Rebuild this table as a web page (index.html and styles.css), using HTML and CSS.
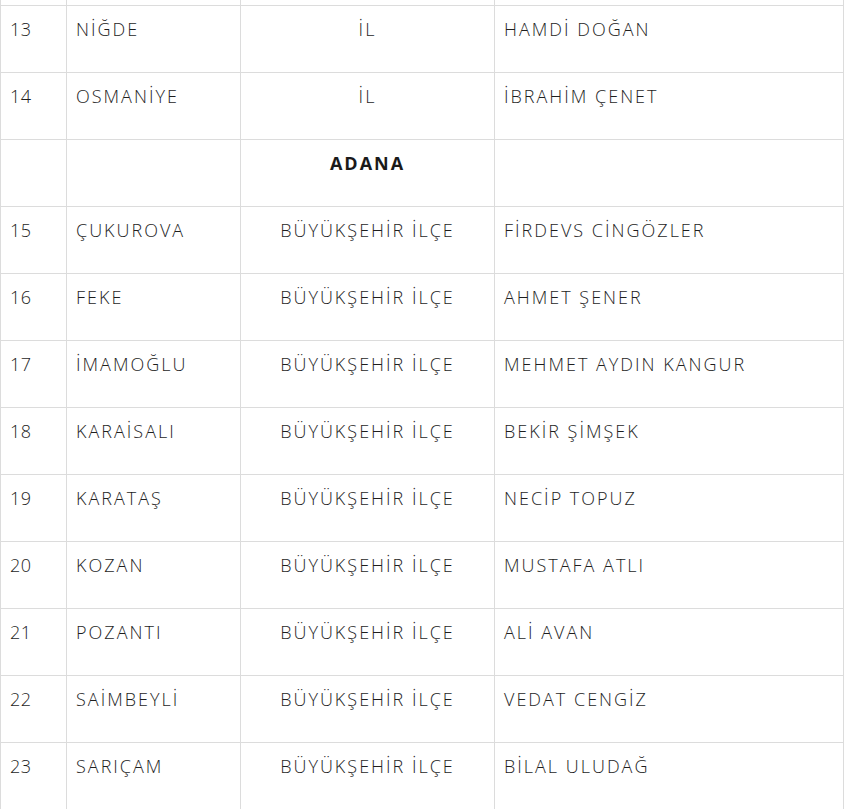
FILE: index.html
```html
<!DOCTYPE html>
<html lang="tr">
<head>
<meta charset="utf-8">
<link rel="stylesheet" href="styles.css">
</head>
<body>
<table class="list">
  <colgroup>
    <col class="c-no">
    <col class="c-name">
    <col class="c-type">
    <col class="c-mayor">
  </colgroup>
  <tbody>
    <tr class="cut"><td></td><td></td><td></td><td></td></tr>
    <tr><td class="num">13</td><td>NİĞDE</td><td class="mid">İL</td><td>HAMDİ DOĞAN</td></tr>
    <tr><td class="num">14</td><td>OSMANİYE</td><td class="mid">İL</td><td>İBRAHİM ÇENET</td></tr>
    <tr><td></td><td></td><td class="mid head">ADANA</td><td></td></tr>
    <tr><td class="num">15</td><td>ÇUKUROVA</td><td class="mid">BÜYÜKŞEHİR İLÇE</td><td>FİRDEVS CİNGÖZLER</td></tr>
    <tr><td class="num">16</td><td>FEKE</td><td class="mid">BÜYÜKŞEHİR İLÇE</td><td>AHMET ŞENER</td></tr>
    <tr><td class="num">17</td><td>İMAMOĞLU</td><td class="mid">BÜYÜKŞEHİR İLÇE</td><td>MEHMET AYDIN KANGUR</td></tr>
    <tr><td class="num">18</td><td>KARAİSALI</td><td class="mid">BÜYÜKŞEHİR İLÇE</td><td>BEKİR ŞİMŞEK</td></tr>
    <tr><td class="num">19</td><td>KARATAŞ</td><td class="mid">BÜYÜKŞEHİR İLÇE</td><td>NECİP TOPUZ</td></tr>
    <tr><td class="num">20</td><td>KOZAN</td><td class="mid">BÜYÜKŞEHİR İLÇE</td><td>MUSTAFA ATLI</td></tr>
    <tr><td class="num">21</td><td>POZANTI</td><td class="mid">BÜYÜKŞEHİR İLÇE</td><td>ALİ AVAN</td></tr>
    <tr><td class="num">22</td><td>SAİMBEYLİ</td><td class="mid">BÜYÜKŞEHİR İLÇE</td><td>VEDAT CENGİZ</td></tr>
    <tr><td class="num">23</td><td>SARIÇAM</td><td class="mid">BÜYÜKŞEHİR İLÇE</td><td>BİLAL ULUDAĞ</td></tr>
  </tbody>
</table>
</body>
</html>
```
FILE: styles.css
```css
html, body {
  margin: 0;
  padding: 0;
  background: #fff;
}

body {
  font-family: "Open Sans", "DejaVu Sans", sans-serif;
  color: #1e1e1e;
  overflow: hidden;
}

.list {
  border-collapse: collapse;
  table-layout: fixed;
  width: 843px;
}

.c-no { width: 66px; }
.c-name { width: 174px; }
.c-type { width: 254px; }
.c-mayor { width: 349px; }

.list td {
  border: 1px solid #dcdcdc;
  box-sizing: border-box;
  height: 67px;
  padding: 10px 9px 0 9px;
  vertical-align: top;
  font-size: 18px;
  font-weight: 300;
  line-height: 27px;
  letter-spacing: 2px;
  white-space: nowrap;
}

.list td.num {
  letter-spacing: 0.6px;
}

.list tr.cut td {
  height: 5px;
  padding: 0;
  border-top: 0;
}

.list td.mid {
  text-align: center;
}

.list td.head {
  font-weight: 700;
  letter-spacing: 2px;
  color: #1a1a1a;
}
```
